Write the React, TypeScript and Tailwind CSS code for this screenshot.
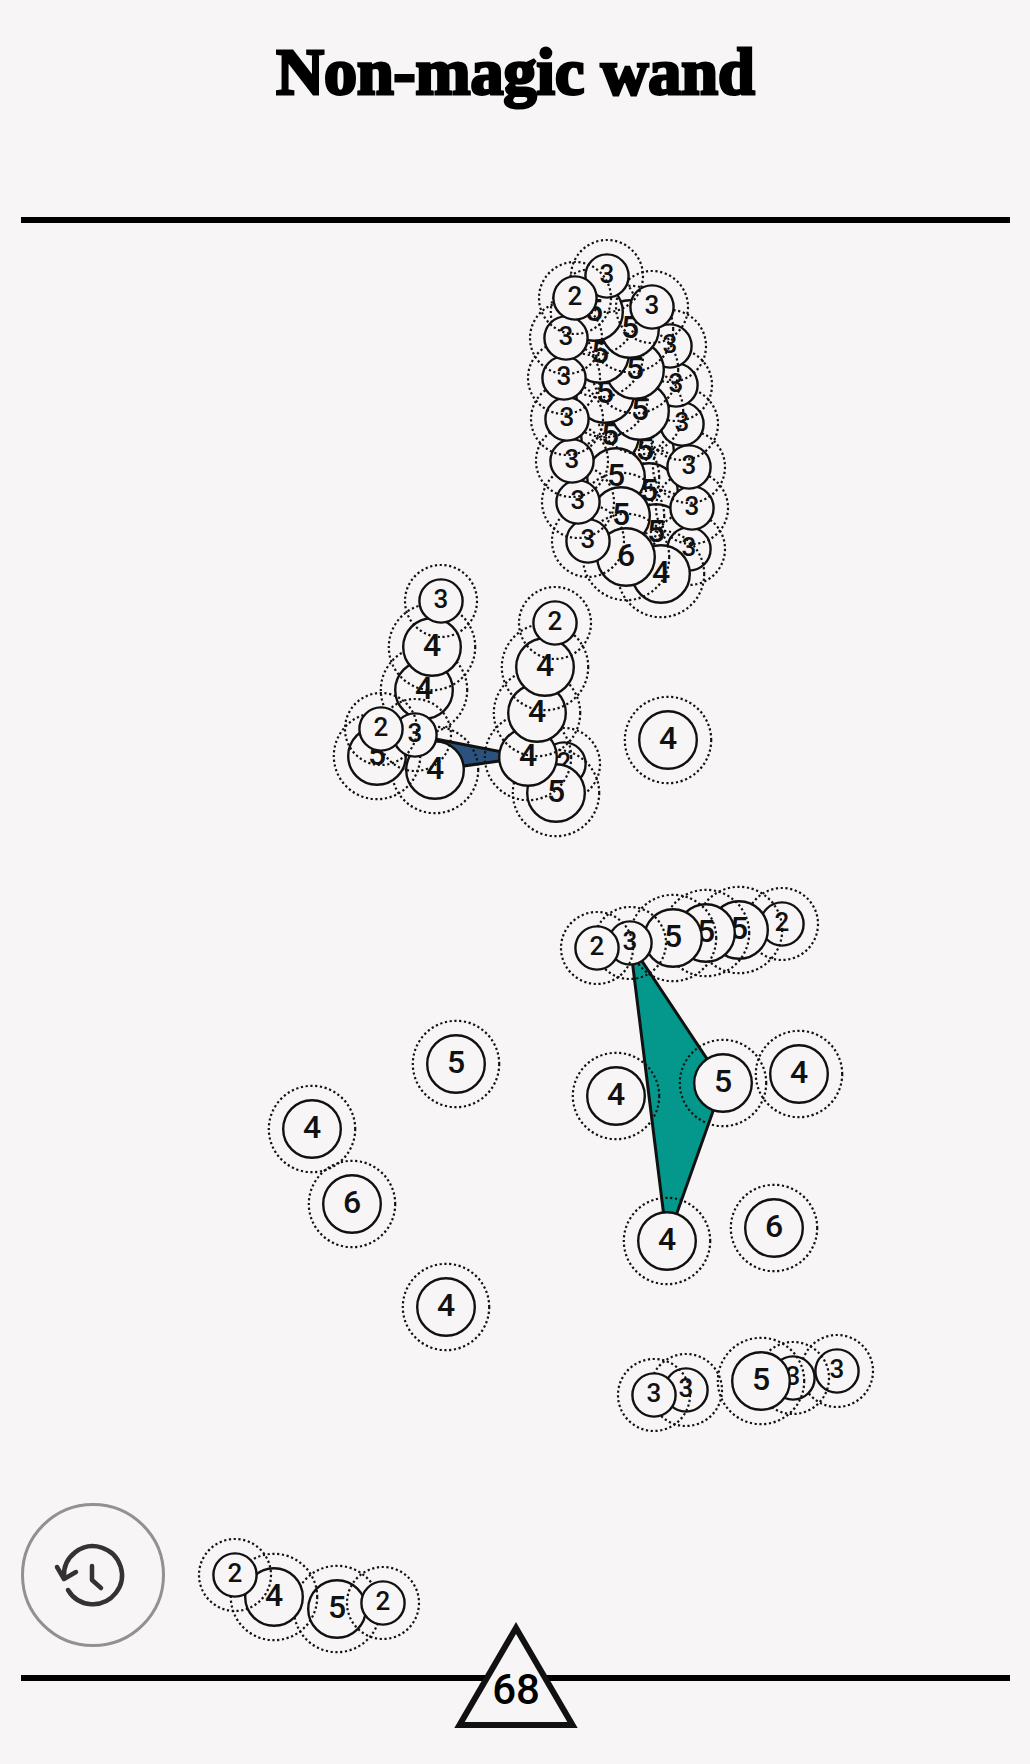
import React from "react";

type Node = [x: number, y: number, value: number, large?: boolean];

// Listed from the topmost node to the bottommost one.
const nodes: Node[] = [
  [575, 298, 2], [607, 276, 3], [652, 307, 3], [566, 338, 3], [564, 378, 3],
  [567, 419, 3], [572, 461, 3], [578, 502, 3], [588, 541, 3],
  [594, 312, 5, true], [630, 329, 5, true], [600, 354, 5, true], [635, 370, 5, true],
  [605, 394, 5, true], [640, 411, 5, true],
  [670, 346, 3], [676, 385, 3], [682, 424, 3], [689, 467, 3], [692, 508, 3],
  [626, 557, 6, true], [661, 574, 4, true], [689, 549, 3],
  [621, 516, 5, true], [656, 533, 5, true], [616, 477, 5, true], [649, 492, 5, true],
  [610, 436, 5, true], [645, 451, 5, true],
  [441, 601, 3], [432, 647, 4, true], [381, 729, 2], [415, 735, 3],
  [424, 690, 4, true], [377, 756, 5, true], [435, 770, 4, true],
  [555, 623, 2], [545, 667, 4, true], [537, 713, 4, true], [528, 757, 4, true],
  [556, 793, 5, true], [564, 764, 2],
  [668, 740, 4, true],
  [597, 948, 2], [630, 943, 3], [673, 938, 5, true], [706, 933, 5, true],
  [739, 930, 5, true], [782, 924, 2],
  [616, 1096, 4, true], [723, 1083, 5, true], [799, 1074, 4, true],
  [667, 1241, 4, true], [774, 1228, 6, true],
  [456, 1064, 5, true], [312, 1129, 4, true], [352, 1204, 6, true], [446, 1307, 4, true],
  [654, 1395, 3], [686, 1390, 3], [761, 1381, 5, true], [793, 1378, 3], [837, 1371, 3],
  [235, 1575, 2], [274, 1597, 4, true], [383, 1603, 2], [337, 1609, 5, true],
];

function PuzzleNode({ node: [x, y, value, large] }: { node: Node }) {
  const r = large ? 28.8 : 21.6;
  return (
    <g>
      <circle cx={x} cy={y} r={r + 14.4} fill="none" stroke="#111" strokeWidth="2.2" strokeDasharray="2.2 2.6" />
      <circle cx={x} cy={y} r={r} fill="#f7f5f6" stroke="#111" strokeWidth="2.4" />
      <text x={x} y={y + (large ? 9 : 7)} textAnchor="middle" fontSize={large ? 32 : 26} fill="#111">
        {value}
      </text>
    </g>
  );
}

function PuzzleCanvas() {
  return (
    <svg viewBox="21 223 989 1452" className="block w-full font-['Roboto',sans-serif] font-medium" role="img" aria-label="Puzzle board">
      <polygon points="630,943 723,1083 667,1241" fill="#04988c" stroke="#111" strokeWidth="3" />
      <polygon points="415,735 528,757 435,770" fill="#2a527d" stroke="#111" strokeWidth="3" />
      {[...nodes].reverse().map((node) => (
        <PuzzleNode key={`${node[0]}-${node[1]}`} node={node} />
      ))}
    </svg>
  );
}

function HistoryIcon() {
  return (
    <svg viewBox="0 0 80 80" className="size-20" fill="none" stroke="#333" strokeWidth="4.5" strokeLinecap="round" strokeLinejoin="round" aria-hidden="true">
      <path d="M11 42A29 29 0 1 1 15 55" />
      <path d="M4 32L11 44L23 37M39 31V45L48 53" />
    </svg>
  );
}

export default function App() {
  return (
    <div className="min-h-screen bg-[#f7f5f6] pr-5 pl-[21px] text-black">
      <header className="flex h-[223px] justify-center border-b-6 border-black pt-8">
        <h1 className="font-['Liberation_Serif',serif] text-[66px] leading-20 font-bold whitespace-nowrap [-webkit-text-stroke:3px_black]">
          Non-magic wand
        </h1>
      </header>
      <main className="relative">
        <PuzzleCanvas />
        <button
          type="button"
          aria-label="History"
          className="absolute bottom-7 left-0 flex size-36 items-center justify-center rounded-full border-3 border-[#919191]"
        >
          <HistoryIcon />
        </button>
      </main>
      <footer className="relative border-t-6 border-black pb-12">
        <button type="button" aria-label="Level 68" className="absolute -top-[60px] left-1/2 -translate-x-1/2">
          <svg viewBox="0 0 124 108" className="block h-[108px] w-[124px]">
            <polygon points="62,7 118.500,104 5.500,104" fill="#f7f5f6" stroke="#111" strokeWidth="6" />
            <text x="62" y="83" textAnchor="middle" className="font-['Roboto',sans-serif] text-[42px] font-medium">
              68
            </text>
          </svg>
        </button>
      </footer>
    </div>
  );
}
